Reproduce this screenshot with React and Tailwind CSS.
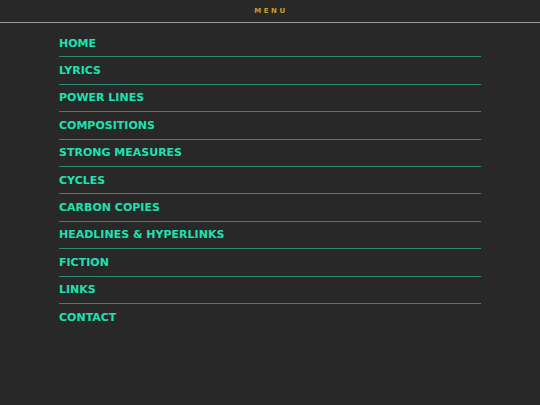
import React from 'react';

const links = [
  'HOME',
  'LYRICS',
  'POWER LINES',
  'COMPOSITIONS',
  'STRONG MEASURES',
  'CYCLES',
  'CARBON COPIES',
  'HEADLINES & HYPERLINKS',
  'FICTION',
  'LINKS',
  'CONTACT',
];

const App = () => {
  return (
    <div className="min-h-[405px] w-full bg-[#282828]" style={{ fontFamily: '"DejaVu Sans", Verdana, sans-serif' }}>
      {/* Header */}
      <div className="h-[23px] border-b border-[#9a9a9a] flex items-center justify-center">
        <span className="text-[7px] font-bold tracking-[2.6px] text-[#c2a227] pl-[2px]">
          MENU
        </span>
      </div>

      {/* Nav list */}
      <nav className="mx-[59px] mt-[7px]">
        <ul>
          {links.map((link, i) => (
            <li
              key={link}
              className={`py-[6.5px] ${i < links.length - 1 ? 'border-b border-[#2c8a71]' : ''}`}
            >
              <a className="block text-[11px] leading-[13.4px] font-bold text-[#1de2b0]">{link}</a>
            </li>
          ))}
        </ul>
      </nav>
    </div>
  );
};

export default App;
